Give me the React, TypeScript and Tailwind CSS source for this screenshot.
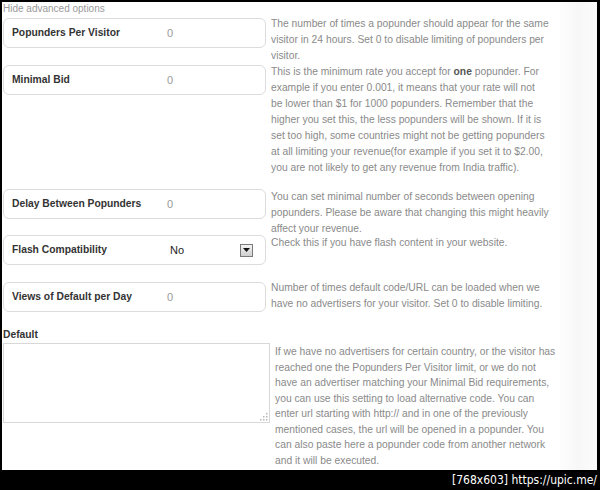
import type { ReactNode } from "react";

const sans = "font-['Liberation_Sans',Arial,sans-serif]";

function Field({
  label,
  value,
  select,
  className = "",
}: {
  label: string;
  value: string;
  select?: boolean;
  className?: string;
}) {
  return (
    <div
      className={`flex h-[30px] w-[263px] shrink-0 items-center rounded-[6px] border border-[#dcdcdc] pl-[8px] ${className}`}
    >
      <span className="w-[155px] text-[10.3px] font-bold text-[#333]">{label}</span>
      {select ? (
        <div className="flex flex-1 items-center pl-[3px] pr-[12px]">
          <span className="flex-1 text-[11px] text-[#222]">{value}</span>
          <span className="flex h-[13px] w-[13px] items-center justify-center border border-[#7a7a7a] bg-gradient-to-b from-[#f4f4f4] to-[#cfcfcf]">
            <svg width="7" height="4" viewBox="0 0 7 4">
              <path d="M0 0h7L3.5 4z" fill="#111" />
            </svg>
          </span>
        </div>
      ) : (
        <span className="text-[11px] text-[#999]">{value}</span>
      )}
    </div>
  );
}

// help text is kept to the same line breaks as the settings page
function Desc({ lines, className = "" }: { lines: ReactNode[]; className?: string }) {
  return (
    <div className={`pl-[5px] text-[10.3px] leading-[16px] whitespace-nowrap text-[#8a8a8a] ${className}`}>
      {lines.map((l, i) => (
        <div key={i}>{l}</div>
      ))}
    </div>
  );
}

export default function App() {
  return (
    <div className={`flex h-[490px] w-[600px] flex-col bg-black ${sans}`}>
      <div className="ml-[2px] mt-[2px] flex h-[468px] w-[595px] overflow-hidden bg-white">
        <div className="flex w-[558px] flex-col pl-[1px]">
          <div className="h-[15px] text-[10px] leading-[14px] text-[#9a9a9a]">Hide advanced options</div>

          {/* per visitor */}
          <div className="flex items-start">
            <Field label="Popunders Per Visitor" value="0" className="mt-[1px]" />
            <Desc
              className="-mt-[1px]"
              lines={[
                "The number of times a popunder should appear for the same",
                "visitor in 24 hours. Set 0 to disable limiting of popunders per",
                "visitor.",
              ]}
            />
          </div>

          {/* minimal bid */}
          <div className="flex items-start">
            <Field label="Minimal Bid" value="0" className="mt-[1px]" />
            <Desc
              lines={[
                <>
                  This is the minimum rate you accept for <b className="text-[#555]">one</b> popunder. For
                </>,
                "example if you enter 0.001, it means that your rate will not",
                "be lower than $1 for 1000 popunders. Remember that the",
                "higher you set this, the less popunders will be shown. If it is",
                "set too high, some countries might not be getting popunders",
                "at all limiting your revenue(for example if you set it to $2.00,",
                "you are not likely to get any revenue from India traffic).",
              ]}
            />
          </div>

          {/* delay */}
          <div className="mt-[13px] flex items-start">
            <Field label="Delay Between Popunders" value="0" />
            <Desc
              lines={[
                "You can set minimal number of seconds between opening",
                "popunders. Please be aware that changing this might heavily",
                "affect your revenue.",
              ]}
            />
          </div>

          {/* flash */}
          <div className="-mt-[2px] flex items-start">
            <Field label="Flash Compatibility" value="No" select className="h-[28px]" />
            <Desc lines={["Check this if you have flash content in your website."]} />
          </div>

          {/* views of default */}
          <div className="mt-[15px] flex items-start">
            <Field label="Views of Default per Day" value="0" className="mt-[2px]" />
            <Desc
              lines={[
                "Number of times default code/URL can be loaded when we",
                "have no advertisers for your visitor. Set 0 to disable limiting.",
              ]}
            />
          </div>

          <div className="mt-[15px] text-[10.3px] font-bold leading-[16px] text-[#333]">Default</div>
          <div className="flex items-start">
            <div className="relative h-[80px] w-[267px] shrink-0 border border-[#d8d8d8]">
              <textarea className="h-full w-full resize-none outline-none" />
              <svg className="absolute bottom-[1px] right-[1px]" width="8" height="8" viewBox="0 0 8 8">
                <g fill="#b8b8b8">
                  <rect x="6" y="0" width="1.5" height="1.5" />
                  <rect x="3" y="3" width="1.5" height="1.5" />
                  <rect x="6" y="3" width="1.5" height="1.5" />
                  <rect x="0" y="6" width="1.5" height="1.5" />
                  <rect x="3" y="6" width="1.5" height="1.5" />
                  <rect x="6" y="6" width="1.5" height="1.5" />
                </g>
              </svg>
            </div>
            <Desc
              className="mt-[1px] !leading-[15.5px]"
              lines={[
                "If we have no advertisers for certain country, or the visitor has",
                "reached one the Popunders Per Visitor limit, or we do not",
                "have an advertiser matching your Minimal Bid requirements,",
                "you can use this setting to load alternative code. You can",
                "enter url starting with http:// and in one of the previously",
                "mentioned cases, the url will be opened in a popunder. You",
                "can also paste here a popunder code from another network",
                "and it will be executed.",
              ]}
            />
          </div>
        </div>
        <div className="flex-1 bg-gradient-to-r from-[#fdfdfd] via-[#f7f7f7] to-[#fcfcfc]" />
      </div>
      <div className="flex flex-1 items-center justify-end pr-[3px] font-['DejaVu_Sans_Condensed','DejaVu_Sans',sans-serif] text-[12px] text-white">
        [768x603] https://upic.me/
      </div>
    </div>
  );
}
